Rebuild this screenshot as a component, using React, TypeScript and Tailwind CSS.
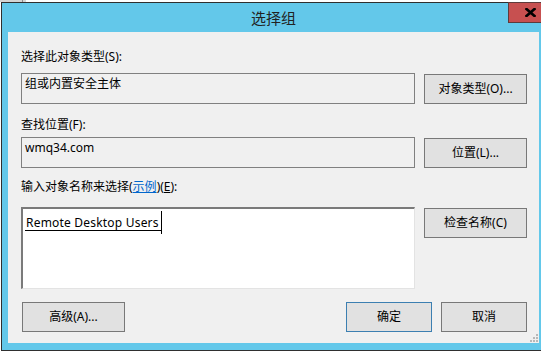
import React from "react";

const font = "font-['Noto_Sans','Noto_Sans_CJK_SC',sans-serif]";

function Button({
  children,
  primary = false,
  className = "",
}: {
  children: React.ReactNode;
  primary?: boolean;
  className?: string;
}) {
  return (
    <button
      type="button"
      className={`flex h-[30px] shrink-0 items-center justify-center border bg-[#e1e1e1] text-[12px] leading-[16px] text-black ${
        primary ? "border-[#3c7fb1]" : "border-[#787878]"
      } ${className}`}
    >
      {children}
    </button>
  );
}

function ReadonlyBox({ value }: { value: string }) {
  return (
    <div className="h-[31px] w-[394px] shrink-0 border border-[#808080] bg-[#f0f0f0] pl-[3px] pt-[2px] text-[12px] leading-[16px] text-black">
      {value}
    </div>
  );
}

function CloseGlyph() {
  return (
    <svg width="11" height="9" viewBox="0 0 11 9">
      <path d="M1.5 1 L9.5 8 M9.5 1 L1.5 8" stroke="#000" strokeWidth="2.6" strokeLinecap="square" />
    </svg>
  );
}

function ResizeGrip() {
  const dots = [
    [6, 0],
    [3, 3],
    [6, 3],
    [0, 6],
    [3, 6],
    [6, 6],
  ];
  return (
    <svg width="8" height="8" viewBox="0 0 8 8">
      {dots.map(([x, y]) => (
        <rect key={`${x}-${y}`} x={x} y={y} width="2" height="2" fill="#b8b8b8" />
      ))}
    </svg>
  );
}

export default function App() {
  return (
    <div className={`relative h-[352px] w-[541px] overflow-hidden bg-white ${font}`}>
      {/* edge of the window behind */}
      <div className="flex h-[2px]">
        <div className="w-[22px] bg-[#d4d4d4]" />
        <div className="w-[1px] bg-[#8c8c8c]" />
        <div className="w-[3px] bg-[#d4d4d4]" />
      </div>

      {/* dialog frame */}
      <div className="relative ml-[1px] w-[546px] border border-[#2f2f2f] bg-[#63c8ea] pb-[7px] pl-[6px] pr-[7px]">
        {/* title bar */}
        <div className="flex h-[29px] items-center justify-center text-[15px] leading-[20px] text-[#222]">
          选择组
        </div>

        <div className="absolute left-[506px] top-[-1px] flex h-[21px] w-[45px] items-center justify-center border border-[#5e3b3b] bg-[#c75050]">
          <CloseGlyph />
        </div>

        {/* client area */}
        <div className="relative h-[311px] bg-[#f0f0f0] pl-[13px] pt-[17px] text-[12px] leading-[16px] text-black">
          <div>选择此对象类型(S):</div>
          <div className="mt-[8px] flex items-start gap-[9px]">
            <ReadonlyBox value="组或内置安全主体" />
            <Button className="mt-[1px] w-[103px]">对象类型(O)...</Button>
          </div>

          <div className="mt-[13px]">查找位置(F):</div>
          <div className="mt-[4px] flex items-start gap-[9px]">
            <ReadonlyBox value="wmq34.com" />
            <Button className="mt-[1px] w-[103px]">位置(L)...</Button>
          </div>

          <div className="mt-[11px]">
            输入对象名称来选择(
            <span className="text-[#0066cc] underline">示例</span>)(<span className="underline">E</span>):
          </div>
          <div className="mt-[12px] flex items-start gap-[9px]">
            <div className="h-[82px] w-[394px] shrink-0 border-b border-l-2 border-r border-t-2 border-b-[#e3e3e3] border-l-[#7a7a7a] border-r-[#e3e3e3] border-t-[#7a7a7a] bg-white pl-[2px] pt-[6px]">
              <div className="relative inline-block">
                <span className="inline-block border-b border-black pl-[1px] pr-[3px] text-[12px] leading-[15px] tracking-[0.2px]">
                  Remote Desktop Users
                </span>
                <span className="absolute right-0 top-[-4px] h-[23px] w-[1px] bg-black" />
              </div>
            </div>
            <Button className="mt-[1px] w-[103px]">检查名称(C)</Button>
          </div>

          <div className="mt-[13px] flex items-start">
            <Button className="ml-[1px] w-[103px]">高级(A)...</Button>
            <Button primary className="ml-[221px] w-[86px]">
              确定
            </Button>
            <Button className="ml-[9px] w-[86px]">取消</Button>
          </div>

          <div className="absolute bottom-[1px] right-[1px]">
            <ResizeGrip />
          </div>
        </div>
      </div>
    </div>
  );
}
